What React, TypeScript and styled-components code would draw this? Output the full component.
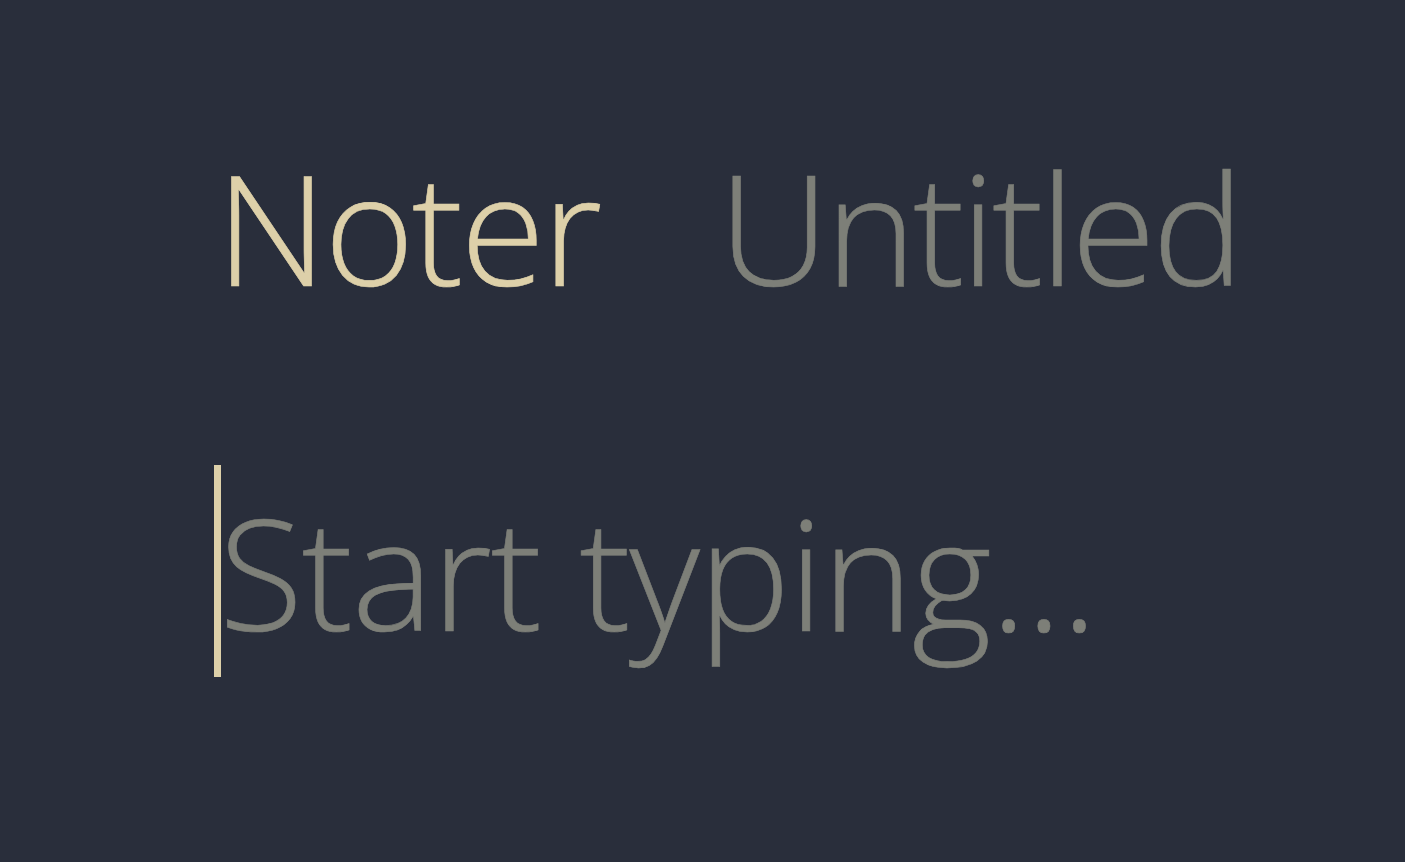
import React from "react";
import styled, { createGlobalStyle } from "styled-components";

const Global = createGlobalStyle`
  html, body { margin: 0; padding: 0; background: #292e3b; }
  body { font-family: "Open Sans", "Noto Sans", sans-serif; }
`;

const Page = styled.div`
  width: 1405px;
  height: 862px;
  background: #292e3b;
  box-sizing: border-box;
  padding: 134px 0 0 214px;
  display: flex;
  flex-direction: column;
  gap: 146px;
  overflow: hidden;
`;

const TitleRow = styled.div`
  display: flex;
  align-items: baseline;
  gap: 119px;
  padding-left: 2px;
`;

const Title = styled.span<{ $tone: "brand" | "muted" }>`
  font-family: "Open Sans", sans-serif;
  font-weight: 300;
  font-size: 154px;
  line-height: 1.2;
  letter-spacing: ${(p) => (p.$tone === "brand" ? "-2.8px" : "-3.6px")};
  color: ${(p) => (p.$tone === "brand" ? "#ddd0a9" : "#7d7f78")};
  -webkit-text-stroke: 0.6px ${(p) => (p.$tone === "brand" ? "#ddd0a9" : "#7d7f78")};
`;

const Editor = styled.div`
  display: flex;
  align-items: stretch;
  height: 212px;
`;

const Caret = styled.span`
  width: 7px;
  background: #ddd0a9;
  flex: none;
`;

const Placeholder = styled.span`
  font-family: "Open Sans", sans-serif;
  font-weight: 300;
  font-size: 154px;
  line-height: 212px;
  letter-spacing: -1.4px;
  color: #7d7f78;
  -webkit-text-stroke: 0.6px #7d7f78;
  margin-left: -2px;
  white-space: nowrap;
`;

export default function App() {
  return (
    <>
      <Global />
      <Page>
        <TitleRow>
          <Title $tone="brand">Noter</Title>
          <Title $tone="muted">Untitled</Title>
        </TitleRow>
        <Editor>
          <Caret />
          <Placeholder>Start typing...</Placeholder>
        </Editor>
      </Page>
    </>
  );
}
